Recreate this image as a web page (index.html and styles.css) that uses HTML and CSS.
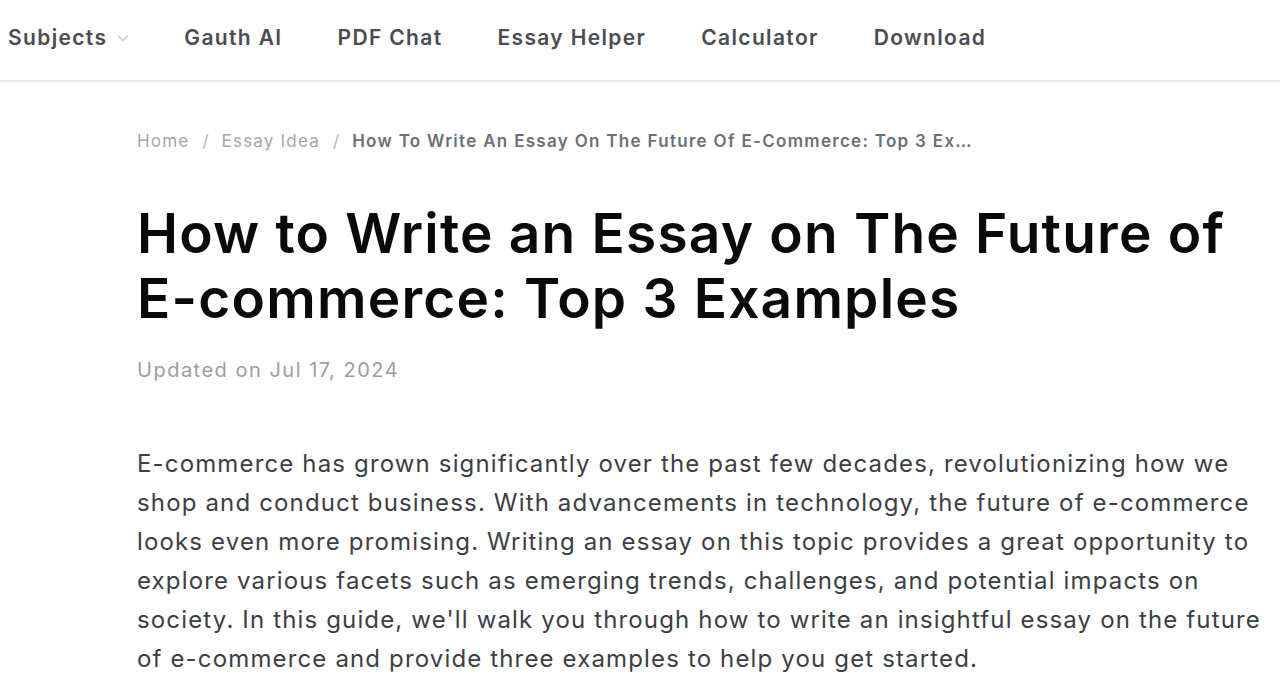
FILE: index.html
```html
<!DOCTYPE html>
<html lang="en">
<head>
<meta charset="utf-8">
<title>How to Write an Essay on The Future of E-commerce</title>
<link rel="stylesheet" href="styles.css">
</head>
<body>
<header class="nav">
  <div class="nav-item subjects">Subjects
    <svg class="chev" width="12" height="8" viewBox="0 0 12 8"><path d="M1 1.5 L6 6.5 L11 1.5" fill="none" stroke="#c6c8cc" stroke-width="1.3"/></svg>
  </div>
  <a class="nav-item">Gauth AI</a>
  <a class="nav-item">PDF Chat</a>
  <a class="nav-item">Essay Helper</a>
  <a class="nav-item">Calculator</a>
  <a class="nav-item">Download</a>
</header>
<main class="article">
  <nav class="crumbs">
    <span class="crumb">Home</span><span class="sep">/</span>
    <span class="crumb">Essay Idea</span><span class="sep">/</span>
    <span class="crumb current">How To Write An Essay On The Future Of E-Commerce: Top 3 Examples</span>
  </nav>
  <h1 class="title">How to Write an Essay on The Future of E-commerce: Top 3 Examples</h1>
  <div class="date">Updated on Jul 17, 2024</div>
  <p class="body">E-commerce has grown significantly over the past few decades, revolutionizing how we shop and conduct business. With advancements in technology, the future of e-commerce looks even more promising. Writing an essay on this topic provides a great opportunity to explore various facets such as emerging trends, challenges, and potential impacts on society. In this guide, we'll walk you through how to write an insightful essay on the future of e-commerce and provide three examples to help you get started.</p>
</main>
</body>
</html>
```
FILE: styles.css
```css
* { box-sizing: border-box; }
html, body { margin: 0; padding: 0; background: #fff; }
body { font-family: Inter, "Noto Sans", sans-serif; color: #303133; overflow: hidden; }
.nav {
  height: 82px;
  border-bottom: 2px solid #e8e9ec;
  display: flex;
  align-items: center;
  padding: 0 0 6px 8px;
  gap: 55px;
}
.nav-item {
  font-size: 21px;
  font-weight: 600;
  letter-spacing: 1.35px;
  color: #4a4c52;
  display: flex;
  align-items: center;
  gap: 10px;
  text-decoration: none;
}
.chev { margin-top: 2px; }
.article {
  padding-left: 137px;
  width: 1280px;
}
.crumbs {
  display: flex;
  align-items: center;
  margin-top: 49px;
  font-size: 17px;
  letter-spacing: 1.2px;
  color: #a3a7ae;
  white-space: nowrap;
}
.sep { margin: 0 13px; color: #b4b7bd; letter-spacing: 0; }
.crumb.current {
  color: #6b6f78;
  font-weight: 600;
  letter-spacing: 1.3px;
  max-width: 620px;
  overflow: hidden;
  text-overflow: ellipsis;
}
.title {
  margin: 50px 0 0;
  font-size: 55px;
  font-weight: 600;
  letter-spacing: 1.2px;
  line-height: 65px;
  color: #0a0a0a;
  max-width: 1100px;
}
.date {
  margin-top: 27px;
  font-size: 20px;
  letter-spacing: 1.5px;
  color: #9a9ea6;
}
.body {
  margin: 62px 0 0;
  font-size: 24px;
  letter-spacing: 1.15px;
  line-height: 39px;
  color: #3c3e44;
  max-width: 1140px;
}
```
